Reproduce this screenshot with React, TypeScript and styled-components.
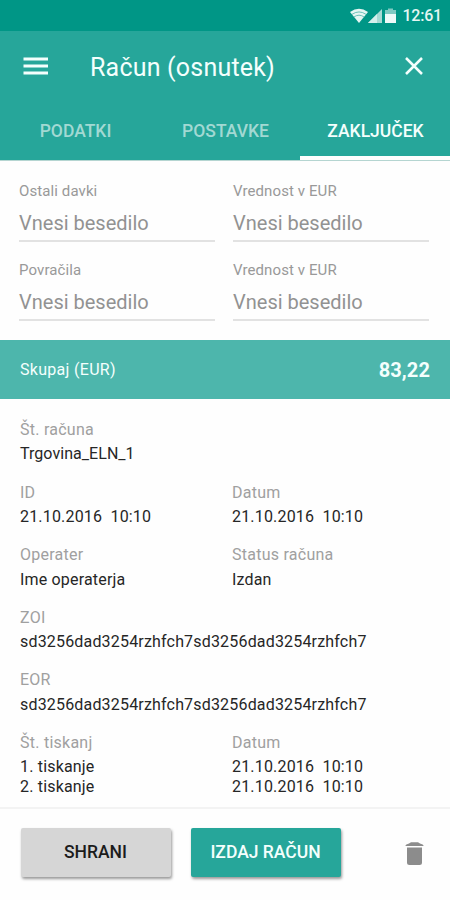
import React from "react";
import styled, { createGlobalStyle } from "styled-components";

const GlobalStyle = createGlobalStyle`
  *, *::before, *::after { box-sizing: border-box; }
  body { margin: 0; background: #fefefe; font-family: Roboto, "Liberation Sans", sans-serif; }
`;

const Screen = styled.div`
  display: flex;
  flex-direction: column;
  width: 450px;
  height: 900px;
  overflow: hidden;
  background: #fefefe;
  color: #222;
`;

const StatusBar = styled.div`
  display: flex;
  align-items: center;
  justify-content: flex-end;
  flex: none;
  height: 31px;
  padding-right: 8px;
  background: #009686;
`;

const Clock = styled.span`
  margin-left: 6px;
  color: #e4f6f3;
  font-size: 16px;
  font-weight: 500;
  line-height: 31px;
  letter-spacing: -0.2px;
`;

const Header = styled.header`
  flex: none;
  height: 130px;
  background: #26a69a;
  border-bottom: 1px solid #b5d5d1;
`;

const Toolbar = styled.div`
  display: flex;
  align-items: center;
  height: 70px;
  padding: 0 26px 0 23px;
`;

const Title = styled.h1`
  flex: 1;
  margin: 3px 0 0 42px;
  color: #f4fffd;
  font-size: 25px;
  font-weight: 400;
  line-height: 32px;
  letter-spacing: 0.2px;
`;

const IconButton = styled.button`
  display: flex;
  padding: 0;
  border: 0;
  background: none;
`;

const Tabs = styled.nav`
  display: grid;
  grid-template-columns: repeat(3, 1fr);
  height: 59px;
`;

const Tab = styled.div<{ $active?: boolean }>`
  padding: 19px 0 0 1px;
  border-bottom: 4px solid ${(p) => (p.$active ? "#fefefe" : "transparent")};
  color: ${(p) => (p.$active ? "#f4fffd" : "#a2d9d3")};
  font-size: 17.5px;
  font-weight: 500;
  line-height: 22px;
  text-align: center;
`;

const Form = styled.section`
  display: grid;
  grid-template-columns: 196px 196px;
  column-gap: 18px;
  grid-auto-rows: 78.5px;
  flex: none;
  height: 179px;
  padding: 20px 19px 0;
`;

const Field = styled.div`
  display: flex;
  flex-direction: column;
`;

const FieldLabel = styled.label`
  color: #999;
  font-size: 15px;
  line-height: 20px;
  letter-spacing: 0.1px;
`;

const FieldInput = styled.div`
  height: 41px;
  padding-top: 9px;
  border-bottom: 2px solid #e2e2e2;
  color: #929292;
  font-size: 20px;
  line-height: 26px;
`;

const TotalBar = styled.div`
  display: flex;
  align-items: center;
  justify-content: space-between;
  flex: none;
  height: 59px;
  padding: 0 20px;
  background: #4db6ac;
  color: #f4fffd;
  font-size: 16px;
  letter-spacing: 0.3px;
`;

const TotalAmount = styled.strong`
  font-size: 20px;
  font-weight: 700;
  letter-spacing: 0.1px;
`;

const Details = styled.section`
  display: flex;
  flex-direction: column;
  flex: none;
  height: 408px;
  padding: 19px 20px 0;
`;

const DetailRow = styled.div`
  display: grid;
  grid-template-columns: 212px 1fr;
  flex: none;
  height: 62.6px;
`;

const DetailLabel = styled.div`
  color: #a0a0a0;
  font-size: 16px;
  line-height: 23px;
  letter-spacing: 0.25px;
`;

const DetailValue = styled.div<{ $spacing?: string }>`
  margin-top: 3.4px;
  color: #262626;
  font-size: 16px;
  line-height: 19.6px;
  letter-spacing: ${(p) => p.$spacing ?? "0.18px"};
  white-space: pre;
`;

const Footer = styled.footer`
  display: flex;
  flex: 1;
  padding: 19px 26px 0 20.5px;
  border-top: 2px solid #f3f3f3;
`;

const Button = styled.button<{ $primary?: boolean }>`
  width: 150px;
  height: 49px;
  margin-right: 20px;
  padding: 0 0 2px;
  border: 0;
  border-radius: 2px;
  background: ${(p) => (p.$primary ? "#26a69a" : "#d6d6d6")};
  box-shadow: 1px 2px 3px rgba(0, 0, 0, 0.4);
  color: ${(p) => (p.$primary ? "#f4fffd" : "#1c1c1c")};
  font: 500 17.5px/24px Roboto, sans-serif;
`;

const DeleteButton = styled(IconButton)`
  margin: 14px 0 0 auto;
  align-self: flex-start;
`;

const fields = [
  ["Ostali davki", "Vnesi besedilo"],
  ["Vrednost v EUR", "Vnesi besedilo"],
  ["Povračila", "Vnesi besedilo"],
  ["Vrednost v EUR", "Vnesi besedilo"],
];

type Item = { label: string; value: string; spacing?: string };

const details: Item[][] = [
  [{ label: "Št. računa", value: "Trgovina_ELN_1", spacing: "0.05px" }],
  [
    { label: "ID", value: "21.10.2016  10:10" },
    { label: "Datum", value: "21.10.2016  10:10" },
  ],
  [
    { label: "Operater", value: "Ime operaterja" },
    { label: "Status računa", value: "Izdan" },
  ],
  [{ label: "ZOI", value: "sd3256dad3254rzhfch7sd3256dad3254rzhfch7" }],
  [{ label: "EOR", value: "sd3256dad3254rzhfch7sd3256dad3254rzhfch7" }],
  [
    { label: "Št. tiskanj", value: "1. tiskanje\n2. tiskanje" },
    { label: "Datum", value: "21.10.2016  10:10\n21.10.2016  10:10" },
  ],
];

const StatusIcons = () => (
  <svg width="46" height="16" viewBox="0 0 46 16">
    <path d="M0 4Q9 -2.5 18 4L9 15Z" fill="#e4f6f3" />
    <path d="M2 6.3Q9 1.6 16 6.3M4 8.9Q9 5.5 14 8.9" fill="none" stroke="#4bb3a8" strokeWidth="0.8" />
    <path d="M18 15L32 1V15Z" fill="#a8dad4" />
    <path d="M18 15L27 6V15Z" fill="#d5efec" />
    <path d="M35 2h3V0.5h5V2h3v4H35Z" fill="#7fcac2" />
    <path d="M35 6h11v9H35Z" fill="#eefaf8" />
  </svg>
);

export default function App() {
  return (
    <>
      <GlobalStyle />
      <Screen>
        <StatusBar>
          <StatusIcons />
          <Clock>12:61</Clock>
        </StatusBar>
        <Header>
          <Toolbar>
            <IconButton aria-label="Meni">
              <svg width="25" height="18" viewBox="0 0 25 18">
                <path d="M0.5 2H25M0.5 9H25M0.5 16H25" stroke="#f4fffd" strokeWidth="3" />
              </svg>
            </IconButton>
            <Title>Račun (osnutek)</Title>
            <IconButton aria-label="Zapri">
              <svg width="20" height="20" viewBox="0 0 20 20">
                <path d="M2 2L18 18M18 2L2 18" stroke="#f4fffd" strokeWidth="2.5" />
              </svg>
            </IconButton>
          </Toolbar>
          <Tabs>
            <Tab>PODATKI</Tab>
            <Tab>POSTAVKE</Tab>
            <Tab $active>ZAKLJUČEK</Tab>
          </Tabs>
        </Header>
        <Form>
          {fields.map(([label, value], i) => (
            <Field key={i}>
              <FieldLabel>{label}</FieldLabel>
              <FieldInput>{value}</FieldInput>
            </Field>
          ))}
        </Form>
        <TotalBar>
          <span>Skupaj (EUR)</span>
          <TotalAmount>83,22</TotalAmount>
        </TotalBar>
        <Details>
          {details.map((row, i) => (
            <DetailRow key={i}>
              {row.map((item) => (
                <div key={item.label}>
                  <DetailLabel>{item.label}</DetailLabel>
                  <DetailValue $spacing={item.spacing}>{item.value}</DetailValue>
                </div>
              ))}
            </DetailRow>
          ))}
        </Details>
        <Footer>
          <Button>SHRANI</Button>
          <Button $primary>IZDAJ RAČUN</Button>
          <DeleteButton aria-label="Izbriši">
            <svg width="19" height="23" viewBox="0 0 19 23">
              <path d="M0.5 3.4Q0.5 2.2 4 1.4L6 0.3H13L15 1.4Q18.5 2.2 18.5 3.4V4H0.5ZM2 5.5H17V20.5Q17 23 14.5 23H4.5Q2 23 2 20.5Z" fill="#8c8c8c" />
            </svg>
          </DeleteButton>
        </Footer>
      </Screen>
    </>
  );
}
